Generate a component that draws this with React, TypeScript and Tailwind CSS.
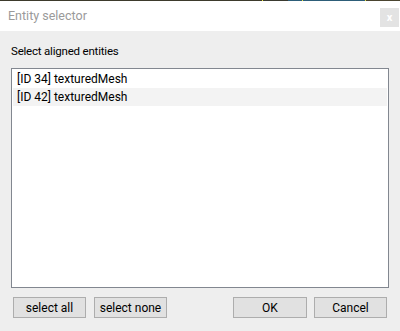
export default function App() {
  const font = { fontFamily: 'Roboto, "Noto Sans", sans-serif' };
  return (
    <div className="w-[400px] h-[331px] bg-[#eeeeee] flex flex-col overflow-hidden" style={font}>
      <div className="h-px flex">
        <div className="w-[262px] bg-[#3d3a2c]" />
        <div className="w-px bg-[#e6e23a]" />
        <div className="w-[25px] bg-[#3a3a30]" />
        <div className="w-[14px] bg-[#2d5d78]" />
        <div className="w-px bg-[#e6e23a]" />
        <div className="w-[62px] bg-[#2d5d78]" />
        <div className="w-px bg-[#e6e23a]" />
        <div className="flex-1 bg-[#4a4430]" />
      </div>
      <div className="h-[30px] bg-white flex items-start justify-between pl-[8px]">
        <span className="text-[12.5px] leading-[30px] text-[#9a9a9a]">Entity selector</span>
        <div className="mt-[7px] mr-px w-[19px] h-[19px] bg-[#e3e3e3] flex items-center justify-center text-white text-[11px] leading-none font-bold">
          x
        </div>
      </div>
      <div className="flex-1 flex flex-col px-[11px] pt-[12px]">
        <div className="text-[11.5px] tracking-[-0.2px] leading-[16px] text-[#000]">Select aligned entities</div>
        <div className="mt-[9px] h-[220px] border border-[#828790] bg-white p-px flex flex-col">
          <div className="h-[18px] pl-[4px] text-[12px] leading-[18px] text-black">[ID 34] texturedMesh</div>
          <div className="h-[18px] pl-[4px] text-[12px] leading-[18px] text-black bg-[#f3f3f3]">[ID 42] texturedMesh</div>
        </div>
        <div className="mt-[9px] flex px-[2px]">
          <div className="flex gap-[8px]">
            <button className="w-[73px] h-[21px] bg-[#e1e1e1] border border-[#adadad] text-[12px] leading-none text-black">select all</button>
            <button className="w-[73px] h-[21px] bg-[#e1e1e1] border border-[#adadad] text-[12px] leading-none text-black">select none</button>
          </div>
          <div className="flex-1" />
          <div className="flex gap-[7px]">
            <button className="w-[74px] h-[21px] bg-[#e1e1e1] border border-[#adadad] text-[12px] leading-none text-black">OK</button>
            <button className="w-[73px] h-[21px] bg-[#e1e1e1] border border-[#adadad] text-[12px] leading-none text-black">Cancel</button>
          </div>
        </div>
      </div>
    </div>
  );
}
